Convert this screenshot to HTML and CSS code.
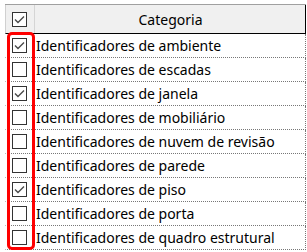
FILE: index.html
```html
<!DOCTYPE html>
<html lang="pt">
<head>
    <meta charset="UTF-8">
    <title>Categorias</title>
    <link rel="stylesheet" href="styles.css">
</head>
<body>
    <div class="grid">
        <div class="header">
            <div class="cell-check">
                <span class="checkbox checked">
                    <svg viewBox="0 0 13 13"><polyline points="2,6.5 5,9.5 11,3.5"/></svg>
                </span>
            </div>
            <div class="cell-name">Categoria</div>
        </div>

        <div class="row">
            <div class="cell-check"><span class="checkbox checked"><svg viewBox="0 0 13 13"><polyline points="2,6.5 5,9.5 11,3.5"/></svg></span></div>
            <div class="cell-name">Identificadores de ambiente</div>
        </div>
        <div class="row">
            <div class="cell-check"><span class="checkbox"></span></div>
            <div class="cell-name">Identificadores de escadas</div>
        </div>
        <div class="row">
            <div class="cell-check"><span class="checkbox checked"><svg viewBox="0 0 13 13"><polyline points="2,6.5 5,9.5 11,3.5"/></svg></span></div>
            <div class="cell-name">Identificadores de janela</div>
        </div>
        <div class="row">
            <div class="cell-check"><span class="checkbox"></span></div>
            <div class="cell-name">Identificadores de mobiliário</div>
        </div>
        <div class="row">
            <div class="cell-check"><span class="checkbox"></span></div>
            <div class="cell-name">Identificadores de nuvem de revisão</div>
        </div>
        <div class="row">
            <div class="cell-check"><span class="checkbox"></span></div>
            <div class="cell-name">Identificadores de parede</div>
        </div>
        <div class="row">
            <div class="cell-check"><span class="checkbox checked"><svg viewBox="0 0 13 13"><polyline points="2,6.5 5,9.5 11,3.5"/></svg></span></div>
            <div class="cell-name">Identificadores de piso</div>
        </div>
        <div class="row">
            <div class="cell-check"><span class="checkbox"></span></div>
            <div class="cell-name">Identificadores de porta</div>
        </div>
        <div class="row">
            <div class="cell-check"><span class="checkbox"></span></div>
            <div class="cell-name">Identificadores de quadro estrutural</div>
        </div>

        <!-- highlight around the checkbox column -->
        <div class="highlight"></div>
    </div>
</body>
</html>
```

FILE: styles.css
```css
* {
    margin: 0;
    padding: 0;
    box-sizing: border-box;
}

body {
    background: #fff;
    font-family: 'Noto Sans', 'Open Sans', sans-serif;
    font-size: 14px;
    color: #000;
}

.grid {
    position: relative;
    margin: 4px 0 0 5px;
    width: 301px;
    border-top: 1px solid #a0a0a0;
}

.header {
    display: flex;
    height: 29px;
    background: #f0f0f0;
    border-left: 1px solid #d0d0d0;
    border-right: 1px solid #000;
    border-bottom: 1px solid #000;
}

.header .cell-check {
    border-right: 1px solid #d5d5d5;
}

.header .cell-name {
    justify-content: center;
}

.row {
    display: flex;
    height: 24px;
    border-left: 1px solid #fff;
    border-right: 1px dotted #777;
    border-bottom: 1px dotted #777;
}

.cell-check {
    width: 29px;
    flex: none;
    display: flex;
    align-items: center;
    padding-left: 6px;
}

.cell-name {
    flex: 1;
    display: flex;
    align-items: center;
    padding-left: 1px;
    white-space: nowrap;
}

.checkbox {
    display: block;
    width: 15px;
    height: 15px;
    border: 1px solid #333;
    background: #fff;
}

.checkbox svg {
    display: block;
    width: 13px;
    height: 13px;
    fill: none;
    stroke: #4a4a4a;
    stroke-width: 1.4;
}

.highlight {
    position: absolute;
    left: 2px;
    top: 27px;
    width: 28px;
    height: 218px;
    border: 3px solid #ff0000;
    border-radius: 5px;
}
```
